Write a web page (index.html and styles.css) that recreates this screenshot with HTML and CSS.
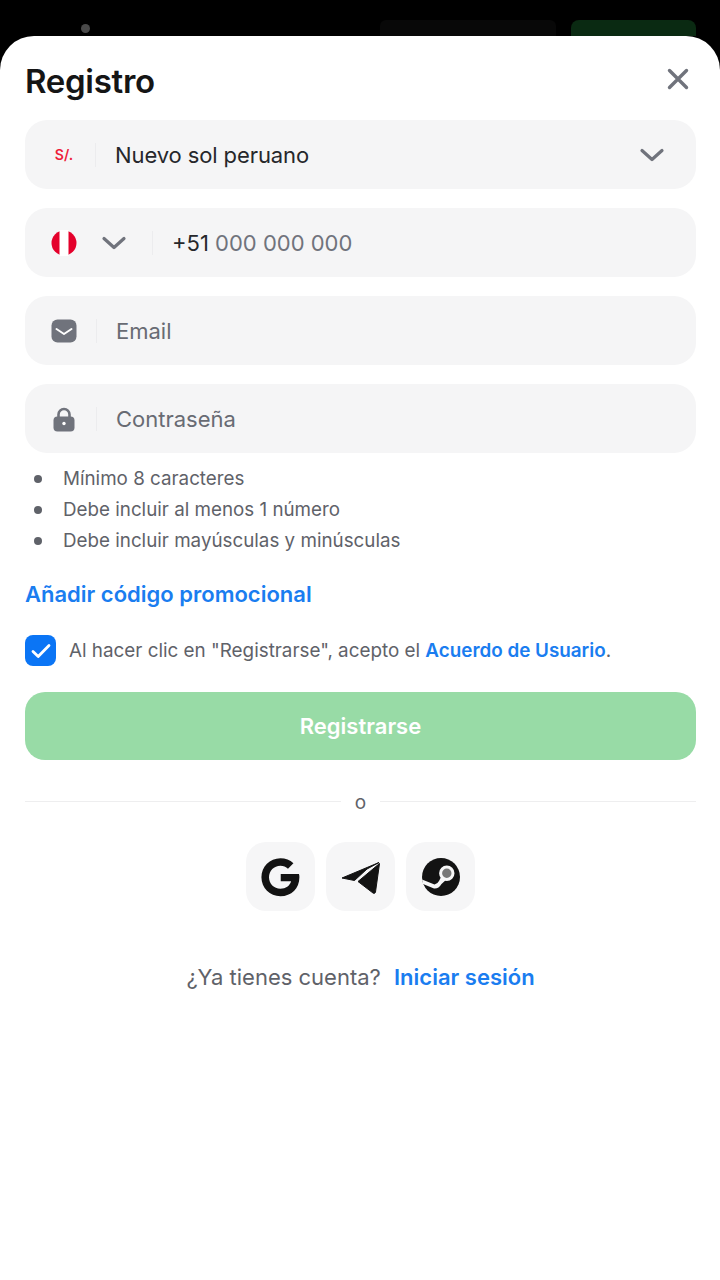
FILE: index.html
```html
<!DOCTYPE html>
<html lang="es">
<head>
    <meta charset="UTF-8">
    <meta name="viewport" content="width=device-width, initial-scale=1.0">
    <title>Registro</title>
    <link rel="stylesheet" href="styles.css">
</head>
<body>
    <div class="topbar">
        <span class="topbar-dot"></span>
        <span class="topbar-login"></span>
        <span class="topbar-signup"></span>
    </div>

    <div class="sheet">
        <div class="sheet-head">
            <h2>Registro</h2>
            <svg class="close" width="24" height="24" viewBox="0 0 24 24"><path d="M3.500 3.500 20.500 20.500M20.500 3.500 3.500 20.500" fill="none" stroke="#70737c" stroke-width="3.400" stroke-linecap="round"/></svg>
        </div>

        <div class="field">
            <span class="field-icon currency">S/.</span>
            <span class="field-sep"></span>
            <span class="field-value">Nuevo sol peruano</span>
            <svg class="chevron chevron-end" width="26" height="16" viewBox="0 0 26 16"><path d="M3 3.500 13 12.500 23 3.500" fill="none" stroke="#70737c" stroke-width="3.200" stroke-linecap="round" stroke-linejoin="round"/></svg>
        </div>

        <div class="field">
            <svg class="field-icon" width="26" height="26" viewBox="0 0 26 26">
                <circle cx="13" cy="13" r="12.500" fill="#e4002b"/>
                <rect x="8.500" y="0" width="9" height="26" fill="#fff"/>
            </svg>
            <svg class="chevron phone-chevron" width="26" height="16" viewBox="0 0 26 16"><path d="M3 3.500 13 12.500 23 3.500" fill="none" stroke="#70737c" stroke-width="3.200" stroke-linecap="round" stroke-linejoin="round"/></svg>
            <span class="field-sep phone-sep"></span>
            <span class="phone"><span class="phone-code">+51</span> 000 000 000</span>
        </div>

        <div class="field">
            <svg class="field-icon" width="26" height="24" viewBox="0 0 26 24">
                <rect x="0.500" y="0.500" width="25" height="23" rx="6" fill="#70737c"/>
                <path d="M5.500 10 13 15 20.500 10" fill="none" stroke="#fff" stroke-width="2" stroke-linecap="round" stroke-linejoin="round"/>
            </svg>
            <span class="field-sep input-sep"></span>
            <span class="field-placeholder">Email</span>
        </div>

        <div class="field">
            <svg class="field-icon" width="26" height="26" viewBox="0 0 26 26">
                <path d="M7.500 12V8.500a5.500 5.500 0 0 1 11 0V12" fill="none" stroke="#70737c" stroke-width="2.600"/>
                <rect x="2.500" y="10.500" width="21" height="15" rx="4" fill="#70737c"/>
                <circle cx="13" cy="17.500" r="1.700" fill="#fff"/>
            </svg>
            <span class="field-sep input-sep"></span>
            <span class="field-placeholder">Contraseña</span>
        </div>

        <ul class="rules">
            <li>Mínimo 8 caracteres</li>
            <li>Debe incluir al menos 1 número</li>
            <li>Debe incluir mayúsculas y minúsculas</li>
        </ul>

        <a class="promo" href="#">Añadir código promocional</a>

        <div class="terms">
            <span class="checkbox">
                <svg width="20" height="16" viewBox="0 0 20 16"><path d="M2 8.500 7.200 13.500 18 2.500" fill="none" stroke="#fff" stroke-width="2.800" stroke-linecap="round" stroke-linejoin="round"/></svg>
            </span>
            <span>Al hacer clic en "Registrarse", acepto el <a href="#">Acuerdo de Usuario</a>.</span>
        </div>

        <button class="submit">Registrarse</button>

        <div class="divider"><span>o</span></div>

        <div class="socials">
            <span class="social">
                <svg width="40" height="40" viewBox="2 1 37.500 37.500"><path d="M37.600 17H20.500v6.800h9.700c-1.200 4.300-5 7-10 7-6 0-10.700-4.800-10.700-10.800S14.200 9.200 20.200 9.200c2.800 0 5.200 1 7.100 2.700l5.100-5.100C29.200 3.900 25 2.200 20.200 2.200 10.300 2.200 2.400 10.100 2.400 20s7.900 17.800 17.800 17.800c10.300 0 17.800-7.200 17.800-17.800 0-1-.1-2-.4-3z" fill="#131313"/></svg>
            </span>
            <span class="social">
                <svg width="40" height="40" viewBox="0 0 40 40">
                    <path d="M1 21 38 5.500 26 12 13.500 23.500z" fill="#131313" stroke="#131313" stroke-linejoin="round"/>
                    <path d="M17 24.500 38.500 6.500 34.500 35c-.2 1.200-1.400 1.800-2.400 1.100z" fill="#131313" stroke="#131313" stroke-linejoin="round"/>
                </svg>
            </span>
            <span class="social">
                <svg width="40" height="40" viewBox="0 0 40 40">
                    <circle cx="20" cy="20" r="19" fill="#131313"/>
                    <path d="M1 22.500 13.500 27.500Q16.500 27 18 24L21 18 26 22 20.500 27Q17.500 32 13 31.500L2 27z" fill="#f6f6f7"/>
                    <circle cx="25.800" cy="16.200" r="6.200" fill="#777" stroke="#f6f6f7" stroke-width="3"/>
                </svg>
            </span>
        </div>

        <p class="login">¿Ya tienes cuenta? <a href="#">Iniciar sesión</a></p>
    </div>
</body>
</html>
```

FILE: styles.css
```css
* {
    box-sizing: border-box;
}

html, body {
    height: 100%;
}

body {
    font-family: 'Inter', sans-serif;
    margin: 0;
    background-color: #000;
    display: flex;
    flex-direction: column;
    overflow: hidden;
}

a {
    color: #1a7df0;
    font-weight: 600;
    text-decoration: none;
}

.topbar {
    height: 36px;
    flex: none;
    display: flex;
    align-items: flex-end;
    padding: 0 24px 0 81px;
}

.topbar-dot {
    width: 9px;
    height: 9px;
    border-radius: 50%;
    background-color: #4a4a4a;
    margin-bottom: 3px;
}

.topbar-login {
    width: 176px;
    height: 16px;
    margin-left: auto;
    border-radius: 6px 6px 0 0;
    background-color: #080808;
}

.topbar-signup {
    width: 125px;
    height: 16px;
    margin-left: 15px;
    border-radius: 8px 8px 0 0;
    background-color: #0a2a12;
}

.sheet {
    flex: 1;
    background-color: #fff;
    border-radius: 34px 34px 0 0;
    padding: 0 24px 0 25px;
}

.sheet-head {
    height: 84px;
    display: flex;
    align-items: center;
    justify-content: space-between;
    padding: 6px 6px 0 0;
}

.sheet-head h2 {
    margin: 0;
    font-size: 33px;
    font-weight: 600;
    letter-spacing: -0.3px;
    color: #151515;
}

.close {
    margin-bottom: 4px;
}

.field {
    height: 69px;
    margin-bottom: 19px;
    padding: 0 26px 0 26px;
    display: flex;
    align-items: center;
    background-color: #f5f5f6;
    border-radius: 22px;
}

.field-icon {
    flex: none;
    width: 26px;
    display: block;
}

.currency {
    font-size: 14px;
    font-weight: 600;
    color: #ee1c3a;
    text-align: center;
    white-space: nowrap;
}

.field-sep {
    flex: none;
    width: 1px;
    height: 24px;
    margin: 0 19px 0 18px;
    background-color: #ececee;
}

.input-sep {
    margin-left: 19px;
}

.phone-sep {
    margin-left: 25px;
}

.field-value {
    font-size: 22px;
    color: #26272b;
    letter-spacing: -0.1px;
}

.field-placeholder {
    font-size: 22px;
    color: #686b73;
}

.chevron-end {
    margin-left: auto;
    margin-right: 5px;
}

.phone-chevron {
    margin-left: 24px;
}

.phone {
    font-size: 22px;
    color: #70737c;
}

.phone-code {
    color: #26272b;
}

.rules {
    list-style: none;
    margin: -9px 0 0;
    padding: 0;
}

.rules li {
    height: 31px;
    display: flex;
    align-items: center;
    font-size: 18.800px;
    color: #5f6269;
}

.rules li::before {
    content: '';
    width: 8px;
    height: 8px;
    margin: 0 21px 0 9px;
    border-radius: 50%;
    background-color: #5f6269;
}

.promo {
    display: block;
    margin-top: 23px;
    font-size: 22px;
    line-height: 30px;
}

.terms {
    margin-top: 26px;
    display: flex;
    align-items: center;
    gap: 13px;
    font-size: 18.840px;
    color: #5f6269;
}

.checkbox {
    flex: none;
    width: 31px;
    height: 31px;
    display: flex;
    align-items: center;
    justify-content: center;
    background-color: #0b75f5;
    border-radius: 8px;
}

.submit {
    display: block;
    width: 100%;
    height: 68px;
    margin-top: 26px;
    border: none;
    border-radius: 20px;
    background-color: #98dba6;
    color: #fff;
    font-family: inherit;
    font-size: 22px;
    font-weight: 600;
}

.divider {
    margin-top: 27px;
    display: flex;
    align-items: center;
    gap: 14px;
    font-size: 19px;
    line-height: 24px;
    color: #5f6269;
}

.divider span {
    padding-top: 4px;
}

.divider::before,
.divider::after {
    content: '';
    flex: 1;
    height: 1px;
    background-color: #eeeeef;
}

.socials {
    margin-top: 27px;
    display: flex;
    justify-content: center;
    gap: 11px;
}

.social {
    width: 69px;
    height: 69px;
    display: flex;
    align-items: center;
    justify-content: center;
    background-color: #f6f6f7;
    border-radius: 20px;
}

.login {
    margin: 51px 0 0;
    text-align: center;
    font-size: 22px;
    line-height: 30px;
    color: #5f6269;
}

.login a {
    margin-left: 7px;
}
```
